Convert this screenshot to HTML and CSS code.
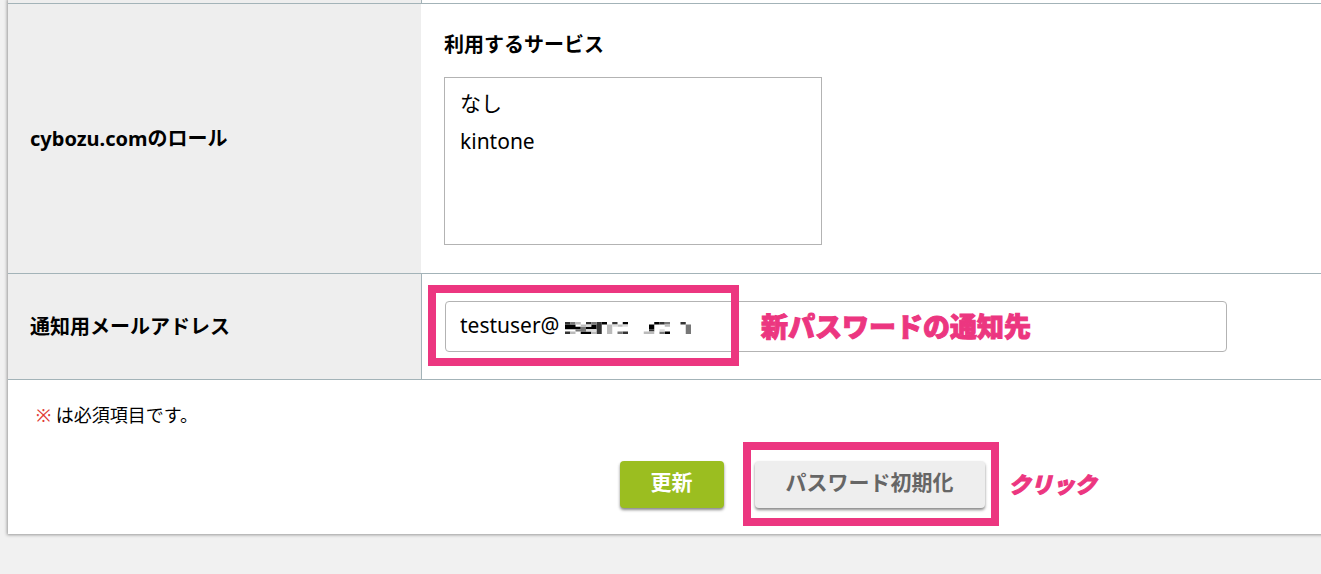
FILE: index.html
```html
<!DOCTYPE html>
<html lang="ja">
<head>
  <meta charset="UTF-8">
  <meta name="viewport" content="width=device-width, initial-scale=1.0">
  <title>ユーザー情報の変更</title>
  <link rel="stylesheet" href="styles.css">
</head>
<body>
  <form class="panel">
    <div class="row row-prev">
      <div class="label"></div>
      <div class="field line"></div>
    </div>
    <div class="row">
      <div class="label">cybozu.comのロール</div>
      <div class="field field-role">
        <label class="title" for="services">利用するサービス</label>
        <select id="services" class="services" size="4">
          <option>なし</option>
          <option>kintone</option>
        </select>
      </div>
    </div>
    <div class="row">
      <label class="label" for="mail">通知用メールアドレス</label>
      <div class="field line field-mail">
        <input type="text" id="mail" class="mail" value="testuser@">
        <svg class="mosaic" width="126" height="12" viewBox="0 0 24 5" preserveAspectRatio="none" aria-hidden="true">
          <path fill="#000" d="M0 1h2v1h-2zM0 2h3v1h-3zM4 2h2v1h-2zM3 4h2v1h-2zM5 1h1v1h-1zM7 0h1v1h-1zM11 0h1v1h-1zM17 0h1v1h-1zM16 1h1v2h-1zM19 4h1v1h-1z"/>
          <path fill="#333" d="M0 0h1v1h-1zM6 0h1v5h-1zM4 0h1v1h-1zM9 0h1v1h-1zM11 4h1v1h-1zM18 0h1v1h-1zM22 0h1v1h-1zM0 4h1v1h-1zM16 3h1v1h-1z"/>
          <path fill="#777" d="M1 0h1v1h-1zM3 2h1v1h-1zM2 3h2v1h-2zM10 4h1v1h-1zM19 0h1v1h-1zM18 4h1v1h-1zM23 1h1v4h-1zM5 0h1v1h-1z"/>
          <path fill="#bbb" d="M2 0h1v1h-1zM3 1h1v1h-1zM8 1h1v4h-1zM10 1h1v1h-1zM15 4h2v1h-2zM19 1h1v1h-1zM5 4h1v1h-1zM1 4h1v1h-1z"/>
          <path fill="#ddd" d="M4 1h1v1h-1zM9 1h1v1h-1zM11 1h1v1h-1zM4 3h2v1h-2zM18 3h1v1h-1z"/>
        </svg>
        <span class="mark mark-mail"></span>
        <span class="note note-mail">新パスワードの通知先</span>
      </div>
    </div>
    <p class="required"><span class="red">※</span> は必須項目です。</p>
    <div class="buttons">
      <button type="submit" class="btn btn-green">更新</button>
      <div class="reset">
        <button type="button" class="btn">パスワード初期化</button>
        <span class="mark mark-reset"></span>
        <span class="note note-click">クリック</span>
      </div>
    </div>
  </form>
</body>
</html>
```
FILE: styles.css
```css
* {
  box-sizing: border-box;
}
body {
  margin: 0;
  min-height: 100vh;
  background-color: #f1f1f1;
  font-family: "Noto Sans", "Noto Sans CJK JP", sans-serif;
  font-size: 20px;
  color: #000;
  overflow: hidden;
}
.panel {
  margin: 0 -8px 0 8px;
  padding-bottom: 26px;
  background-color: #fff;
  box-shadow: 0 0 3px 1px #999;
}
.row {
  display: flex;
  border-bottom: 1px solid #a3b3b8;
}
.row-prev {
  height: 4px;
}
.label {
  flex: 0 0 413px;
  display: flex;
  align-items: center;
  padding: 0 0 3px 22px;
  background-color: #eee;
  font-weight: bold;
}
.field {
  flex: 1;
  position: relative;
  padding-left: 23px;
}
.line {
  border-left: 1px solid #a3b3b8;
}
.field-role {
  padding-top: 25px;
  padding-bottom: 28px;
}
.title {
  display: block;
  line-height: 32px;
  margin-bottom: 16px;
  font-weight: bold;
}
.services {
  display: block;
  width: 378px;
  height: 168px;
  padding: 4px 11px;
  border: 1px solid #b3b3b3;
  border-radius: 0;
  background-color: #fff;
  font: inherit;
  font-size: 21px;
  color: #000;
  overflow: hidden;
  appearance: none;
}
.services option {
  padding: 5px 4px;
}
.field-mail {
  padding-top: 27px;
  padding-bottom: 27px;
}
.mail {
  display: block;
  width: 782px;
  height: 51px;
  padding: 0 14px 3px;
  border: 1px solid #b3b3b3;
  border-radius: 4px;
  font: inherit;
  font-size: 21px;
  color: #000;
}
.mosaic {
  position: absolute;
  left: 143px;
  top: 48px;
}
.mark {
  position: absolute;
  border: 8px solid #ec3680;
  pointer-events: none;
}
.mark-mail {
  left: 6px;
  top: 11px;
  width: 311px;
  height: 81px;
}
.note {
  position: absolute;
  color: #ec3680;
  font-family: "Noto Sans CJK JP", sans-serif;
  font-weight: 900;
  font-size: 27px;
  line-height: 32px;
  white-space: nowrap;
  -webkit-text-stroke: 1px #ec3680;
}
.note-mail {
  left: 339px;
  top: 36px;
}
.required {
  margin: 0;
  padding: 21px 28px 0;
  font-size: 18px;
  line-height: 28px;
}
.red {
  color: #e03a35;
}
.buttons {
  display: flex;
  justify-content: center;
  gap: 31px;
  margin-top: 32px;
  padding-left: 267px;
}
.btn {
  display: block;
  height: 47px;
  padding: 0 31px 8px;
  border: 0;
  border-radius: 4px;
  background-color: #eee;
  box-shadow: 0 2px 3px #888;
  color: #666;
  font: inherit;
  font-size: 21px;
  font-weight: bold;
}
.btn-green {
  background-color: #9bbe20;
  color: #fff;
}
.reset {
  position: relative;
}
.mark-reset {
  left: -12px;
  top: -19px;
  width: 256px;
  height: 84px;
}
.note-click {
  left: 254px;
  top: 6px;
  font-size: 22px;
  font-style: italic;
}
```
